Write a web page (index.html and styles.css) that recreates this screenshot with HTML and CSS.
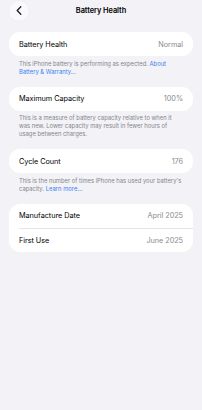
FILE: index.html
```html
<!DOCTYPE html>
<html lang="en">
<head>
<meta charset="utf-8">
<title>Battery Health</title>
<link rel="stylesheet" href="styles.css">
</head>
<body>
<div class="screen">
  <header class="nav">
    <button class="back" aria-label="Back">
      <svg width="6" height="9" viewBox="0 0 6 9"><path d="M4.8 0.8 L1.2 4.5 L4.8 8.2" fill="none" stroke="#1c1c1e" stroke-width="1.3" stroke-linecap="round" stroke-linejoin="round"/></svg>
    </button>
    <h1 class="title">Battery Health</h1>
  </header>

  <section class="group">
    <div class="card">
      <div class="row"><span class="label">Battery Health</span><span class="value">Normal</span></div>
    </div>
    <p class="footer">This iPhone battery is performing as expected. <a class="link">About Battery &amp; Warranty...</a></p>
  </section>

  <section class="group">
    <div class="card">
      <div class="row"><span class="label">Maximum Capacity</span><span class="value">100%</span></div>
    </div>
    <p class="footer">This is a measure of battery capacity relative to when it<br>was new. Lower capacity may result in fewer hours of usage between charges.</p>
  </section>

  <section class="group">
    <div class="card">
      <div class="row"><span class="label">Cycle Count</span><span class="value">176</span></div>
    </div>
    <p class="footer">This is the number of times iPhone has used your battery's capacity. <a class="link">Learn more...</a></p>
  </section>

  <section class="group">
    <div class="card">
      <div class="row"><span class="label">Manufacture Date</span><span class="value">April 2025</span></div>
      <div class="divider"></div>
      <div class="row"><span class="label">First Use</span><span class="value">June 2025</span></div>
    </div>
  </section>
</div>
</body>
</html>
```

FILE: styles.css
```css
* { box-sizing: border-box; }
html, body {
  margin: 0;
  padding: 0;
  background: #f2f2f7;
}
body {
  font-family: Inter, "Liberation Sans", Arial, sans-serif;
  color: #000;
  width: 202px;
  height: 410px;
  overflow: hidden;
}
.screen {
  padding: 0 9px;
}
.nav {
  position: relative;
  height: 32px;
  display: flex;
  justify-content: center;
}
.back {
  position: absolute;
  left: 0;
  top: 0.5px;
  width: 20px;
  height: 20px;
  border-radius: 50%;
  border: none;
  padding: 0;
  background: #f9f9fb;
  box-shadow: 0 0 3px rgba(0,0,0,0.04);
  display: flex;
  align-items: center;
  justify-content: center;
}
.back svg { display: block; margin-left: -1px; }
.title {
  margin: 0;
  font-size: 7.4px;
  font-weight: 600;
  line-height: 21px;
  letter-spacing: -0.05px;
}
.group {
  margin-bottom: 11px;
}
.card {
  background: #fff;
  border-radius: 11px;
  overflow: hidden;
}
.row {
  height: 24px;
  display: flex;
  align-items: center;
  justify-content: space-between;
  padding: 0 10px;
  font-size: 7.3px;
  letter-spacing: -0.05px;
}
.label { color: #000; }
.value { color: #8a8a8e; }
.divider {
  height: 0.5px;
  margin-left: 10px;
  background: #e3e3e8;
}
.footer {
  margin: 3.5px 0 0 0;
  padding: 0 9px 0 10px;
  font-size: 5.85px;
  line-height: 8px;
  color: #86868b;
}
.link { color: #3b7ff0; }
```
